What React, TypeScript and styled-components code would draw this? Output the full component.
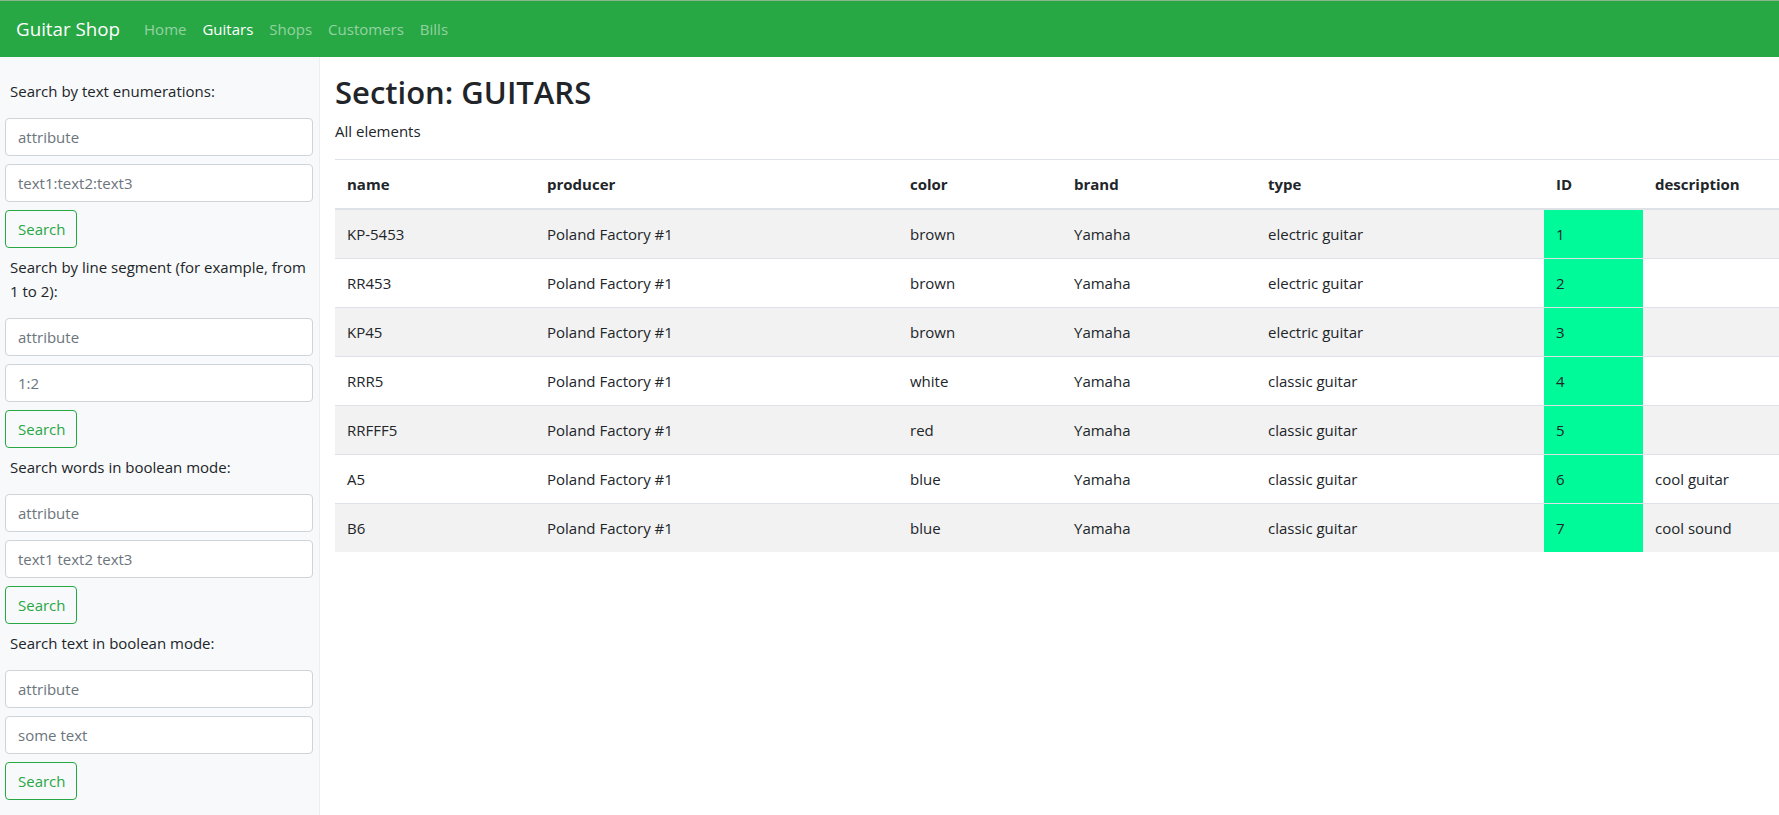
import React from "react";
import styled, { createGlobalStyle } from "styled-components";

const GlobalStyle = createGlobalStyle`
  *, *::before, *::after { box-sizing: border-box; }
  html, body { margin: 0; padding: 0; }
  body {
    font-family: "Open Sans", "Noto Sans", "Liberation Sans", sans-serif;
    font-size: 15px;
    line-height: 24px;
    color: #212529;
    background: #fff;
  }
`;

const Page = styled.div`
  min-height: 100vh;
  display: flex;
  flex-direction: column;
`;

const Navbar = styled.nav`
  display: flex;
  align-items: center;
  height: 57px;
  padding: 0 16px;
  background: #28a745;
  border-top: 1px solid #8fb58f;
`;

const Brand = styled.a`
  font-size: 18.75px;
  line-height: 30px;
  color: #fff;
  margin-right: 16px;
  text-decoration: none;
`;

const NavLink = styled.a<{ $active?: boolean }>`
  padding: 8px;
  font-size: 15px;
  line-height: 24px;
  color: ${(p) => (p.$active ? "#fff" : "rgba(255, 255, 255, 0.5)")};
  text-decoration: none;
`;

const Body = styled.div`
  flex: 1;
  display: flex;
  align-items: stretch;
`;

const Sidebar = styled.aside`
  width: 320px;
  flex: none;
  background: #f8f9fa;
  border-right: 1px solid #eceef0;
  padding: 22px 6px 8px 5px;
`;

const SearchForm = styled.form`
  display: flex;
  flex-direction: column;
  align-items: flex-start;
`;

const FieldLabel = styled.label`
  display: block;
  margin: 0 0 15px 5px;
  line-height: 24px;
  font-size: 15px;
  color: #212529;
`;

const TextInput = styled.input`
  display: block;
  width: 100%;
  height: 38px;
  margin: 0 0 8px;
  padding: 6px 12px;
  font-family: inherit;
  font-size: 15px;
  color: #495057;
  background: #fff;
  border: 1px solid #ced4da;
  border-radius: 4px;
  outline: none;
  &::placeholder {
    color: #6c757d;
  }
`;

const OutlineButton = styled.button`
  height: 38px;
  width: 72px;
  margin: 0 0 7px;
  padding: 6px 12px;
  font-family: inherit;
  font-size: 15px;
  line-height: 24px;
  color: #28a745;
  background: transparent;
  border: 1px solid #28a745;
  border-radius: 4px;
  cursor: pointer;
`;

const Main = styled.main`
  flex: 1;
  min-width: 0;
  padding: 16px 0 0 15px;
`;

const Title = styled.h2`
  margin: 0 0 8px;
  font-size: 31px;
  font-weight: 600;
  line-height: 38px;
`;

const Subtitle = styled.p`
  margin: 0 0 16px;
  line-height: 24px;
`;

const Table = styled.table`
  width: 100%;
  border-collapse: collapse;
  table-layout: fixed;
`;

const HeadCell = styled.th`
  padding: 12px;
  text-align: left;
  font-weight: 700;
  line-height: 24px;
  border-top: 1px solid #dee2e6;
  border-bottom: 2px solid #dee2e6;
  white-space: nowrap;
`;

const Row = styled.tr<{ $striped: boolean }>`
  background: ${(p) => (p.$striped ? "#f2f2f2" : "transparent")};
`;

const Cell = styled.td<{ $highlight?: boolean }>`
  padding: 12px;
  line-height: 24px;
  border-top: 1px solid #dee2e6;
  vertical-align: top;
  white-space: nowrap;
  background: ${(p) => (p.$highlight ? "#00fa9a" : "transparent")};
`;

type Guitar = {
  name: string;
  producer: string;
  color: string;
  brand: string;
  type: string;
  id: number;
  description: string;
};

const guitars: Guitar[] = [
  { name: "KP-5453", producer: "Poland Factory #1", color: "brown", brand: "Yamaha", type: "electric guitar", id: 1, description: "" },
  { name: "RR453", producer: "Poland Factory #1", color: "brown", brand: "Yamaha", type: "electric guitar", id: 2, description: "" },
  { name: "KP45", producer: "Poland Factory #1", color: "brown", brand: "Yamaha", type: "electric guitar", id: 3, description: "" },
  { name: "RRR5", producer: "Poland Factory #1", color: "white", brand: "Yamaha", type: "classic guitar", id: 4, description: "" },
  { name: "RRFFF5", producer: "Poland Factory #1", color: "red", brand: "Yamaha", type: "classic guitar", id: 5, description: "" },
  { name: "A5", producer: "Poland Factory #1", color: "blue", brand: "Yamaha", type: "classic guitar", id: 6, description: "cool guitar" },
  { name: "B6", producer: "Poland Factory #1", color: "blue", brand: "Yamaha", type: "classic guitar", id: 7, description: "cool sound" },
];

const columns = [
  { key: "name", width: 200 },
  { key: "producer", width: 363 },
  { key: "color", width: 164 },
  { key: "brand", width: 194 },
  { key: "type", width: 288 },
  { key: "ID", width: 99 },
  { key: "description", width: undefined as number | undefined },
];

const forms = [
  { label: "Search by text enumerations:", placeholder: "text1:text2:text3" },
  { label: "Search by line segment (for example, from 1 to 2):", placeholder: "1:2" },
  { label: "Search words in boolean mode:", placeholder: "text1 text2 text3" },
  { label: "Search text in boolean mode:", placeholder: "some text" },
];

export default function App() {
  return (
    <Page>
      <GlobalStyle />
      <Navbar>
        <Brand href="#">Guitar Shop</Brand>
        <NavLink href="#">Home</NavLink>
        <NavLink href="#" $active>Guitars</NavLink>
        <NavLink href="#">Shops</NavLink>
        <NavLink href="#">Customers</NavLink>
        <NavLink href="#">Bills</NavLink>
      </Navbar>
      <Body>
        <Sidebar>
          {forms.map((f) => (
            <SearchForm key={f.label} onSubmit={(e) => e.preventDefault()}>
              <FieldLabel>{f.label}</FieldLabel>
              <TextInput placeholder="attribute" />
              <TextInput placeholder={f.placeholder} />
              <OutlineButton type="submit">Search</OutlineButton>
            </SearchForm>
          ))}
        </Sidebar>
        <Main>
          <Title>Section: GUITARS</Title>
          <Subtitle>All elements</Subtitle>
          <Table>
            <colgroup>
              {columns.map((c) => (
                <col key={c.key} style={c.width ? { width: c.width } : undefined} />
              ))}
            </colgroup>
            <thead>
              <tr>
                {columns.map((c) => (
                  <HeadCell key={c.key}>{c.key}</HeadCell>
                ))}
              </tr>
            </thead>
            <tbody>
              {guitars.map((g, i) => (
                <Row key={g.id} $striped={i % 2 === 0}>
                  <Cell>{g.name}</Cell>
                  <Cell>{g.producer}</Cell>
                  <Cell>{g.color}</Cell>
                  <Cell>{g.brand}</Cell>
                  <Cell>{g.type}</Cell>
                  <Cell $highlight>{g.id}</Cell>
                  <Cell>{g.description}</Cell>
                </Row>
              ))}
            </tbody>
          </Table>
        </Main>
      </Body>
    </Page>
  );
}
